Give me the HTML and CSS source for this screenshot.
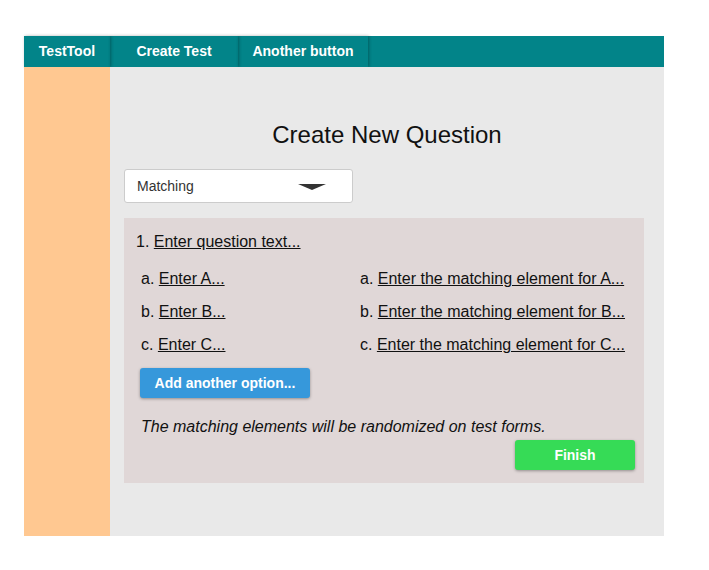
FILE: index.html
```html
<!DOCTYPE html>
<html>
<head>
<meta charset="utf-8">
<link rel="stylesheet" href="styles.css">
</head>
<body>
<div class="app">
  <nav class="navbar">
    <div class="nav-btn brand">TestTool</div>
    <div class="nav-btn create">Create Test</div>
    <div class="nav-btn another">Another button</div>
  </nav>
  <div class="body">
    <aside class="sidebar"></aside>
    <main class="main">
      <h2 class="title">Create New Question</h2>
      <div class="select">
        <span>Matching</span>
        <span class="arrow"></span>
      </div>
      <section class="panel">
        <div class="question">1. <u>Enter question text...</u></div>
        <div class="options">
          <div class="opt">a. <u>Enter A...</u></div>
          <div class="opt">a. <u>Enter the matching element for A...</u></div>
          <div class="opt">b. <u>Enter B...</u></div>
          <div class="opt">b. <u>Enter the matching element for B...</u></div>
          <div class="opt">c. <u>Enter C...</u></div>
          <div class="opt">c. <u>Enter the matching element for C...</u></div>
        </div>
        <button class="btn add">Add another option...</button>
        <p class="note">The matching elements will be randomized on test forms.</p>
        <div class="finish-row"><button class="btn finish">Finish</button></div>
      </section>
    </main>
  </div>
</div>
</body>
</html>
```
FILE: styles.css
```css
* { box-sizing: border-box; }
body {
  margin: 0;
  background: #fff;
  font-family: "Liberation Sans", Arial, sans-serif;
}
.app {
  margin: 36px 0 0 24px;
  width: 640px;
  height: 500px;
  display: flex;
  flex-direction: column;
}
.navbar {
  height: 31px;
  background: #028489;
  display: flex;
}
.nav-btn {
  height: 31px;
  display: flex;
  align-items: center;
  justify-content: center;
  padding-bottom: 1px;
  color: #fff;
  font-weight: bold;
  font-size: 14px;
  box-shadow: 1px 0 3px rgba(0,0,0,0.3);
}
.brand { width: 86px; }
.create { width: 128px; }
.another { width: 130px; }
.body {
  flex: 1;
  display: flex;
}
.sidebar {
  width: 86px;
  background: #ffc891;
}
.main {
  flex: 1;
  background: #e9e9e9;
  padding: 54px 20px 0 14px;
}
.title {
  margin: 0;
  text-align: center;
  font-weight: normal;
  font-size: 24px;
  color: #111;
  line-height: 28px;
  padding-left: 6px;
}
.select {
  margin-top: 20px;
  width: 229px;
  height: 34px;
  background: #fff;
  border: 1px solid #ccc;
  border-radius: 3px;
  display: flex;
  align-items: center;
  justify-content: space-between;
  padding: 0 26px 0 12px;
  font-size: 14px;
  color: #333;
}
.arrow {
  width: 0;
  height: 0;
  border-left: 14px solid transparent;
  border-right: 14px solid transparent;
  border-top: 6px solid #333;
  margin-top: 2px;
}
.panel {
  margin-top: 15px;
  width: 520px;
  height: 265px;
  background: #e0d7d7;
  padding: 15px 9px 0 12px;
  font-size: 16px;
  color: #111;
}
.question {
  line-height: 18px;
}
.options {
  display: grid;
  grid-template-columns: 219px auto;
  row-gap: 15px;
  margin-top: 19px;
  padding-left: 5px;
  line-height: 18px;
}
.btn {
  border: none;
  border-radius: 3px;
  color: #fff;
  font-family: "Liberation Sans", Arial, sans-serif;
  font-weight: bold;
  font-size: 14px;
  height: 30px;
  box-shadow: 0 1px 3px rgba(0,0,0,0.35);
}
.add {
  margin: 14px 0 0 4px;
  width: 170px;
  background: #3698db;
}
.note {
  margin: 20px 0 0 5px;
  font-style: italic;
  line-height: 18px;
}
.finish-row {
  display: flex;
  justify-content: flex-end;
  margin-top: 4px;
}
.finish {
  width: 120px;
  background: #36db56;
}
```
